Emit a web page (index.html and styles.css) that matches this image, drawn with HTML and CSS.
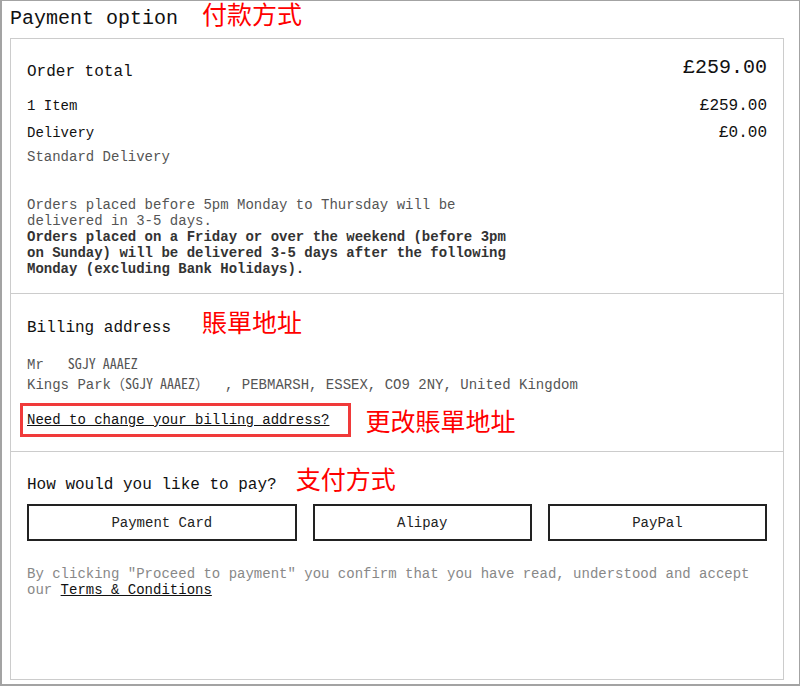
FILE: index.html
```html
<!DOCTYPE html>
<html lang="en">
<head>
  <meta charset="UTF-8">
  <meta name="viewport" content="width=device-width, initial-scale=1.0">
  <title>Payment option</title>
  <link rel="stylesheet" href="styles.css">
</head>
<body>
  <div class="frame">
    <h1 class="page-title">Payment option<span class="note-cn note-title">付款方式</span></h1>

    <div class="card">
      <!-- Order summary -->
      <section class="section summary">
        <div class="summary-head">
          <span class="summary-label">Order total</span>
          <span class="summary-total">£259.00</span>
        </div>
        <div class="summary-row">
          <span>1 Item</span>
          <span class="price">£259.00</span>
        </div>
        <div class="summary-row delivery">
          <span>Delivery</span>
          <span class="price">£0.00</span>
        </div>
        <div class="delivery-type">Standard Delivery</div>
        <p class="delivery-note">
          Orders placed before 5pm Monday to Thursday will be delivered in 3-5 days.<br>
          <strong>Orders placed on a Friday or over the weekend (before 3pm on Sunday) will be delivered 3-5 days after the following Monday (excluding Bank Holidays).</strong>
        </p>
      </section>

      <!-- Billing address -->
      <section class="section billing">
        <h2 class="section-title">Billing address<span class="note-cn note-billing">賬單地址</span></h2>
        <div class="address">
          <div>Mr<span class="name-cjk name-gap">SGJY AAAEZ</span></div>
          <div>Kings Park<span class="name-cjk">（SGJY AAAEZ）</span><span class="addr-rest">, PEBMARSH, ESSEX, CO9 2NY, United Kingdom</span></div>
        </div>
        <div class="change-row">
          <span class="mark-box"><a href="#" class="link">Need to change your billing address?</a></span>
          <span class="note-cn note-change">更改賬單地址</span>
        </div>
      </section>

      <!-- Payment method -->
      <section class="section pay">
        <h2 class="section-title">How would you like to pay?<span class="note-cn note-pay">支付方式</span></h2>
        <div class="pay-buttons">
          <button class="pay-button">Payment Card</button>
          <button class="pay-button">Alipay</button>
          <button class="pay-button">PayPal</button>
        </div>
        <p class="terms">By clicking "Proceed to payment" you confirm that you have read, understood and accept our <a href="#" class="link">Terms &amp; Conditions</a></p>
      </section>
    </div>
  </div>
</body>
</html>
```

FILE: styles.css
```css
body {
  margin: 0;
  font-family: "Liberation Mono", monospace;
  color: #111;
  background: #fff;
}

.frame {
  height: 686px;
  box-sizing: border-box;
  border: 1px solid #a3a3a3;
  border-left-width: 2px;
  border-bottom-width: 2px;
  padding: 0 15px 4px 8px;
  display: flex;
  flex-direction: column;
}

.page-title {
  margin: 0;
  height: 37px;
  font-size: 20px;
  font-weight: normal;
  line-height: 34px;
  white-space: nowrap;
}

.note-cn {
  font-family: "Noto Sans CJK TC", "Noto Sans CJK SC", sans-serif;
  font-size: 25px;
  color: #f00;
  line-height: 1;
}

.note-title {
  margin-left: 24px;
}

.note-billing {
  margin-left: 31px;
}

.note-pay {
  margin-left: 19px;
}

.note-change {
  margin-left: 14px;
}

.card {
  flex: 1;
  border: 1px solid #cccccc;
  display: flex;
  flex-direction: column;
}

.section {
  padding: 16px 16px;
  border-bottom: 1px solid #cccccc;
}

.section:last-child {
  border-bottom: none;
  flex: 1;
}

/* order summary */
.summary {
  padding-top: 17px;
  padding-bottom: 16px;
}

.summary-head {
  display: flex;
  justify-content: space-between;
  align-items: flex-start;
  margin-bottom: 14px;
}

.summary-label {
  font-size: 16px;
  line-height: 20px;
  margin-top: 6px;
}

.summary-total {
  font-size: 20px;
  line-height: 24px;
}

.summary-row {
  display: flex;
  justify-content: space-between;
  align-items: baseline;
  font-size: 14px;
  line-height: 20px;
}

.summary-row .price {
  font-size: 16px;
}

.summary-row.delivery {
  margin-top: 7px;
}

.delivery-type {
  margin-top: 4px;
  font-size: 14px;
  line-height: 20px;
  color: #555;
}

.delivery-note {
  margin: 30px 0 0;
  max-width: 490px;
  font-size: 14px;
  line-height: 16px;
  color: #555;
}

.delivery-note strong {
  color: #333;
}

/* billing */
.section-title {
  margin: 0;
  font-size: 16px;
  font-weight: normal;
  line-height: 28px;
  white-space: nowrap;
}

.billing {
  padding-top: 15px;
  padding-bottom: 14px;
}

.address {
  margin-top: 13px;
  font-size: 14px;
  line-height: 20px;
  color: #555;
  white-space: nowrap;
}

.name-cjk {
  font-family: "Noto Sans Mono CJK TC", "Noto Sans Mono CJK SC", "Noto Sans CJK TC", monospace;
  font-size: 14px;
  line-height: 14px;
}

.name-gap {
  margin-left: 24px;
}

.addr-rest {
  margin-left: 16px;
}

.change-row {
  margin-top: 8px;
  display: flex;
  align-items: center;
  white-space: nowrap;
}

.mark-box {
  margin-left: -7px;
  padding: 4px 19px 4px 4px;
  border: 3px solid #f03a3a;
  font-size: 14px;
  line-height: 20px;
}

.link {
  color: #111;
  text-decoration: underline;
}

/* payment */
.pay {
  padding-top: 14px;
}

.pay-buttons {
  margin-top: 5px;
  display: flex;
  gap: 16px;
}

.pay-button {
  flex: auto;
  height: 37px;
  padding: 0;
  background: #fff;
  border: 2px solid #222;
  font-family: "Liberation Mono", monospace;
  font-size: 14px;
  color: #222;
  cursor: pointer;
}

.terms {
  margin: 25px 0 0;
  font-size: 14px;
  line-height: 16px;
  color: #888;
}
```
